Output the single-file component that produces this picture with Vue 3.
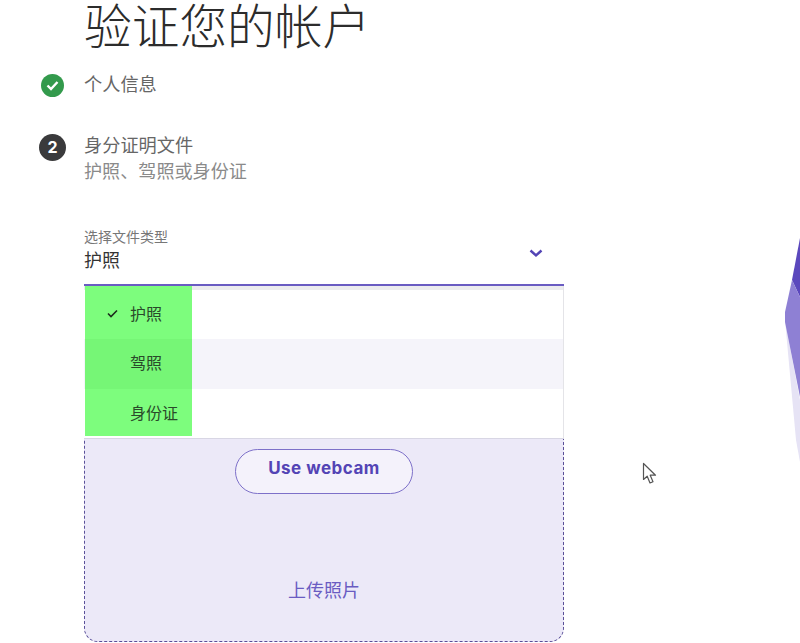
<script setup>
const options = [
  { label: '护照', selected: true },
  { label: '驾照', selected: false },
  { label: '身份证', selected: false }
]
</script>

<template>
  <div class="page">
    <svg class="decor" width="30" height="240" viewBox="770 230 30 240" aria-hidden="true">
      <polygon points="785,320 800,400 800,462 796,440" fill="#e6e3f5" />
      <polygon points="800,238 792,280 800,297" fill="#5b48bd" />
      <polygon points="792,280 785,312 785,322 800,397 800,297" fill="#8e80d4" />
    </svg>
    <svg class="cursor" width="16" height="24" viewBox="0 0 16 24" aria-hidden="true">
      <path d="M1.5 1.5V17.5L5.2 14.2L8 21L11 19.7L8.2 13.2H13.5Z" fill="#fff" stroke="#555" stroke-width="1.2" stroke-linejoin="round" />
    </svg>

    <h1 class="title">验证您的帐户</h1>

    <div class="step step-one">
      <span class="badge done">
        <svg width="13" height="11" viewBox="0 0 13 11" aria-hidden="true">
          <path d="M1.5 5.5L5 9L11.5 2" fill="none" stroke="#fff" stroke-width="2.4" />
        </svg>
      </span>
      <div class="step-name">个人信息</div>
    </div>

    <div class="step step-two">
      <span class="badge current">2</span>
      <div>
        <div class="step-name">身分证明文件</div>
        <div class="step-hint">护照、驾照或身份证</div>
      </div>
    </div>

    <div class="form">
      <div class="select">
        <div class="select-label">选择文件类型</div>
        <div class="select-value">护照</div>
        <svg class="chevron" width="14" height="9" viewBox="0 0 14 9" aria-hidden="true">
          <path d="M1.5 1.5L7 6.5L12.5 1.5" fill="none" stroke="#5344b5" stroke-width="2.4" />
        </svg>
        <ul class="menu">
          <li v-for="(o, i) in options" :key="o.label" class="option" :class="{ alt: i === 1 }">
            <span class="option-cell">
              <svg v-if="o.selected" class="tick" width="11" height="9" viewBox="0 0 11 9" aria-hidden="true">
                <path d="M1 4.5L4 7.5L10 1.5" fill="none" stroke="#1d2b1d" stroke-width="1.6" />
              </svg>
              <span class="option-text">{{ o.label }}</span>
            </span>
          </li>
        </ul>
      </div>

      <div class="upload">
        <button class="webcam" type="button">Use webcam</button>
        <div class="upload-text">上传照片</div>
      </div>
    </div>
  </div>
</template>

<style>
html, body { margin: 0; background: #fff; overflow: hidden; }
</style>

<style scoped>
.page {
  position: relative;
  width: 800px;
  height: 643px;
  overflow: hidden;
  background: #fff;
  font-family: "Noto Sans CJK SC", "Noto Sans", sans-serif;
  color: #333;
}
.decor { position: absolute; left: 770px; top: 230px; }
.cursor { position: absolute; left: 642px; top: 462px; }
.title {
  margin: 0;
  padding-left: 84px;
  height: 52px;
  font-size: 47.7px;
  line-height: 48px;
  font-weight: 300;
  color: #2c2c2c;
}
.step { display: flex; align-items: flex-start; }
.step-one { margin-top: 20px; padding-left: 41px; height: 60px; }
.step-one .step-name { line-height: 22px; }
.step-two { padding-left: 39px; }
.badge {
  display: flex;
  align-items: center;
  justify-content: center;
  border-radius: 50%;
  color: #fff;
  flex: none;
}
.done { width: 23px; height: 23px; background: #339a4c; margin: 2px 20px 0 0; }
.current {
  width: 27px;
  height: 27px;
  margin: 2px 18px 0 0;
  background: #3a3a3c;
  font: 700 16px/27px "Inter", sans-serif;
}
.step-name { font-size: 18.2px; line-height: 24px; color: #666; }
.step-hint { font-size: 18.1px; line-height: 28px; color: #8a8a8a; }
.form { width: 480px; margin: 40px 0 0 84px; }
.select {
  position: relative;
  height: 60px;
  border-bottom: 2px solid #6a5cc2;
}
.select-label { font-size: 14px; line-height: 20px; color: #777; padding-top: 2px; }
.select-value { font-size: 18px; line-height: 26px; color: #333; }
.chevron { position: absolute; right: 21px; top: 25px; }
.menu {
  position: absolute;
  z-index: 2;
  left: 0;
  right: 0;
  top: 62px;
  margin: 0;
  padding: 4px 0 0;
  list-style: none;
  background: #ececee;
  border-right: 1px solid #e4e4e8;
  border-bottom: 1px solid #d8d6e4;
  box-sizing: border-box;
  height: 153px;
}
.option { display: flex; height: 49.3px; background: #fff; }
.option.alt { background: #f5f4fa; }
.option-cell {
  display: flex;
  align-items: center;
  position: relative;
  margin-left: 1px;
  padding-left: 45px;
  width: 62px;
  background: #7dfd7d;
  color: #2a4a2a;
  font-size: 16px;
}
.option.alt .option-cell { background: #76f676; padding-bottom: 4px; }
.option:first-child .option-cell { margin-top: -4px; padding-top: 1px; }
.option:last-child .option-cell { margin-bottom: 2px; }
.tick { position: absolute; left: 22px; top: 50%; margin-top: -4px; }
.upload {
  box-sizing: border-box;
  height: 356px;
  display: flex;
  flex-direction: column;
  align-items: center;
  justify-content: flex-end;
  background: #ece9f8;
  border: 1.5px dashed #5a5099;
  border-radius: 14px;
}
.webcam {
  width: 178px;
  height: 45px;
  padding: 0 0 8px;
  border: 1.5px solid #7d70c9;
  border-radius: 23px;
  background: #f4f2fb;
  color: #5344b5;
  font: 700 17px/20px "Inter", sans-serif;
  letter-spacing: 0.5px;
}
.upload-text {
  margin: 82px 0 39px;
  font-size: 18px;
  line-height: 26px;
  color: #6a5cc2;
}
</style>
